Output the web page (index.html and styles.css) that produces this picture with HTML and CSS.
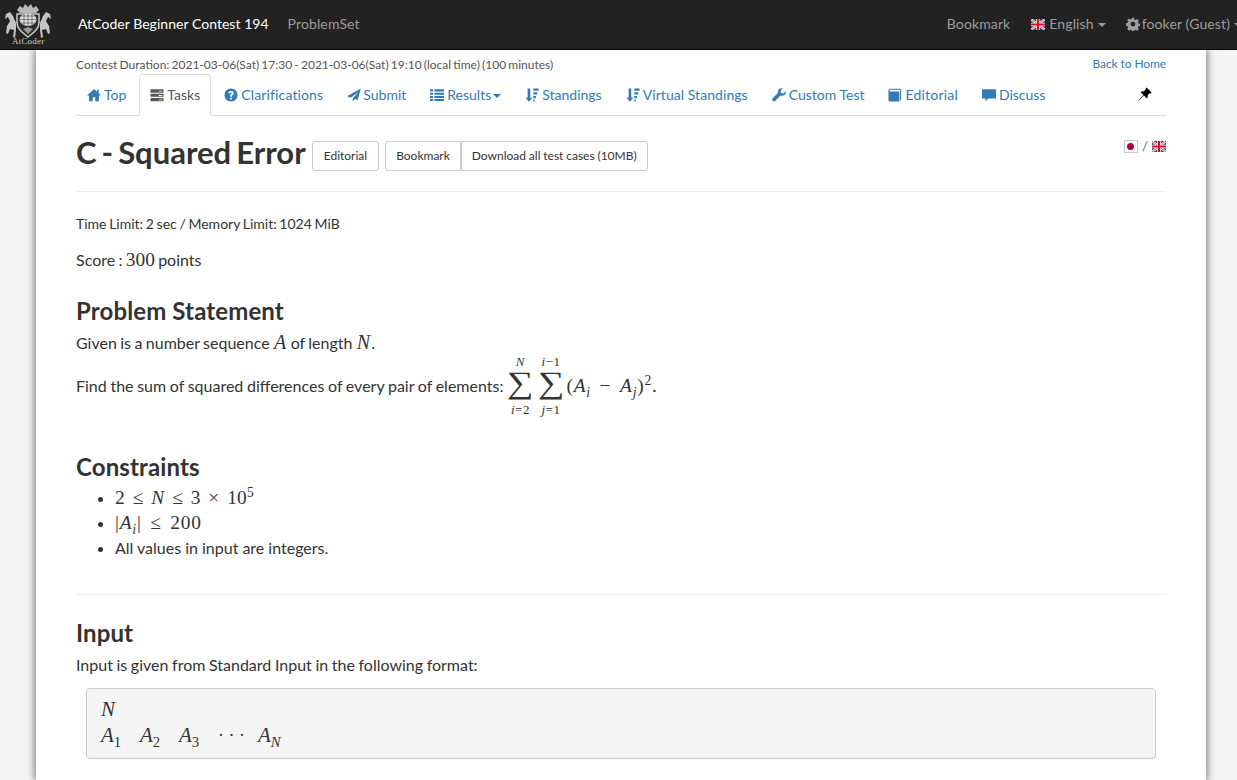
FILE: index.html
```html
<!DOCTYPE html>
<html lang="en">
<head>
<meta charset="utf-8">
<title>C - Squared Error</title>
<link rel="stylesheet" href="styles.css">
</head>
<body>
<svg class="defs" width="0" height="0">
  <symbol id="i-home" viewBox="0 0 16 16"><path d="M8 1 0 8.600h2.400V15h4.100v-4.400h3V15h4.100V8.600H16l-2.600-2.500V2h-2v2.200z"/></symbol>
  <symbol id="i-tasks" viewBox="0 0 16 16"><path d="M1.500 1.500h13q1 0 1 1v2q0 1-1 1h-13q-1 0-1-1v-2q0-1 1-1zm0 5h13q1 0 1 1v1.500q0 1-1 1h-13q-1 0-1-1V7.500q0-1 1-1zm0 5h13q1 0 1 1v1.500q0 1-1 1h-13q-1 0-1-1v-1.500q0-1 1-1z"/><path fill="#fff" d="M10 3h4v1h-4zM10 8h4v1h-4zM10 13h4v1h-4z"/></symbol>
  <symbol id="i-q" viewBox="0 0 16 16"><path fill-rule="evenodd" d="M8 .5a7.500 7.500 0 1 1 0 15A7.500 7.500 0 0 1 8 .5zM7 11v2h2v-2zM8 3.300c-1.800 0-3 1-3.100 2.700h2c.1-.6.500-1 1.100-1 .6 0 1 .3 1 .8 0 1-2 1.200-2 3.500V10h2v-.4c0-1.500 2.100-1.700 2.100-3.900 0-1.500-1.300-2.400-3.100-2.400z"/></symbol>
  <symbol id="i-send" viewBox="0 0 16 16"><path d="M15.800.5 0 9.500l4.200 1.500L13 4.500 6.500 12v3.500l2.500-2.900 3.200 1.200z"/></symbol>
  <symbol id="i-list" viewBox="0 0 16 16"><path d="M0 1.500h3.500V4H0zM5 1.500h11V4H5zM0 5.300h3.500v2.500H0zM5 5.300h11v2.500H5zM0 9h3.500v2.500H0zM5 9h11v2.500H5zM0 12.600h3.500v2.200H0zM5 12.600h11v2.200H5z"/></symbol>
  <symbol id="i-sort" viewBox="0 0 16 16"><path d="M3 .5h3v10.500h2.400l-3.900 4.800L.6 11H3zM9.500.5H15.500v2.600H9.500zM9.500 4.800H14v2.600H9.500zM9.500 9H12.500v2.600H9.500zM9.500 13.200h1.600v2.200H9.500z"/></symbol>
  <symbol id="i-wrench" viewBox="0 0 16 16"><path d="M15.500 3.800 13 6.300l-2.700-.6-.6-2.700L12.200.5C10-.3 7.500.8 6.800 3c-.3 1-.3 1.800 0 2.600L.8 11.700c-.8.800-.8 2.200 0 3 .8.900 2.200.9 3 0l6.100-6c2.600 1 5.700-.7 5.900-3.500 0-.5-.1-1-.3-1.400z"/></symbol>
  <symbol id="i-book" viewBox="0 0 16 16"><path d="M.5 3C.5 1.700 1.500.8 2.700.8H15v12.500l-1.200 1V2H3C2.300 2 1.900 2.400 1.900 3s.5 1 1.100 1h10v11.500H2.700C1.500 15.500.5 14.500.5 13.300z"/></symbol>
  <symbol id="i-comment" viewBox="0 0 16 16"><path d="M1 1.500h14q1 0 1 1v8.500q0 1-1 1H7l-3 3v-3H1q-1 0-1-1V2.500q0-1 1-1z"/></symbol>
  <symbol id="i-pin" viewBox="0 0 16 16"><path d="M9.800.5 15.500 6.200l-1.200 1.200-1-.3-2.300 2.300c.4 1.400.1 2.700-.9 3.600L6.800 9.700 1 15.500l-.5-.5 5.800-5.800L3 5.900c.9-1 2.200-1.300 3.600-.9l2.300-2.300-.3-1z"/></symbol>
  <symbol id="i-cog" viewBox="0 0 16 16"><path fill-rule="evenodd" d="M6.700.8h2.600l.4 2 1.300.6 1.800-1.100 1.900 1.900-1.100 1.800.6 1.300 2 .4v2.600l-2 .4-.6 1.300 1.100 1.800-1.900 1.900-1.800-1.100-1.300.6-.4 2H6.700l-.4-2-1.300-.6-1.800 1.100-1.900-1.900 1.100-1.800-.6-1.300-2-.4V7.100l2-.4.600-1.300-1.100-1.800 1.900-1.900 1.800 1.100 1.300-.6zM8 5.400a2.700 2.700 0 1 0 0 5.400 2.700 2.700 0 0 0 0-5.400z"/></symbol>
  <symbol id="i-uk" viewBox="0 0 14 11" preserveAspectRatio="none"><rect width="14" height="11" fill="#2b3f8f"/><path d="M0 0l14 11M14 0 0 11" stroke="#fff" stroke-width="2.200"/><path d="M0 0l14 11M14 0 0 11" stroke="#d0203a" stroke-width=".8"/><path d="M7 0v11M0 5.500h14" stroke="#fff" stroke-width="3.600"/><path d="M7 0v11M0 5.500h14" stroke="#d80f1e" stroke-width="2.200"/></symbol>
</svg>

<header class="topbar">
  <a class="logo" href="#">
    <svg class="crest" viewBox="0 0 52 36" aria-hidden="true">
      <path d="M15 8l3-4 3 2 2-4 3 3 3-3 2 4 3-2 3 4-3 3H18z" fill="#b9b9b9"/>
      <path d="M15 12h22v9c0 6-6 10-11 14-5-4-11-8-11-14z" fill="#2b2b2b" stroke="#c9c9c9" stroke-width="1.500"/>
      <ellipse cx="26" cy="17.500" rx="8.500" ry="6.500" fill="#ddd"/>
      <path d="M17.500 17.500h17M26 11v13M19 14h14M19 21h14M22 11.500v12M30 11.500v12" stroke="#555" stroke-width=".7"/>
      <path d="M21 27l5-2 5 2-5 5z" fill="#999"/>
      <path d="M11 35l1-7-4-1-2 5-2-1 1-7 3-5-2-4-3 2 1-5 4-2 3 4 3 7v7l-1 8zM41 35l-1-7 4-1 2 5 2-1-1-7-3-5 2-4 3 2-1-5-4-2-3 4-3 7v7l1 8z" fill="#c4c4c4"/>
    </svg>
    <span class="logo-word">AtCoder</span>
  </a>
  <nav class="main-nav">
    <a class="brand" href="#">AtCoder Beginner Contest 194</a>
    <a class="pset" href="#">ProblemSet</a>
  </nav>
  <nav class="user-nav">
    <a class="first" href="#">Bookmark</a>
    <a href="#"><svg class="flag-nav"><use href="#i-uk"/></svg>English<i class="caret"></i></a>
    <a class="user" href="#"><svg class="ico"><use href="#i-cog"/></svg>fooker (Guest)<i class="caret"></i></a>
  </nav>
</header>

<main class="sheet">
  <div class="duration-row">
    <small class="duration">Contest Duration: 2021-03-06(Sat) 17:30 - 2021-03-06(Sat) 19:10 (local time) (100 minutes)</small>
    <a class="back" href="#">Back to Home</a>
  </div>

  <ul class="tabs">
    <li><a href="#"><svg class="ico"><use href="#i-home"/></svg>Top</a></li>
    <li class="active"><a href="#"><svg class="ico"><use href="#i-tasks"/></svg>Tasks</a></li>
    <li class="wide"><a href="#"><svg class="ico"><use href="#i-q"/></svg>Clarifications</a></li>
    <li class="send"><a href="#"><svg class="ico"><use href="#i-send"/></svg>Submit</a></li>
    <li><a href="#"><svg class="ico"><use href="#i-list"/></svg>Results<i class="caret tab-caret"></i></a></li>
    <li><a href="#"><svg class="ico"><use href="#i-sort"/></svg>Standings</a></li>
    <li class="virtual"><a href="#"><svg class="ico"><use href="#i-sort"/></svg>Virtual Standings</a></li>
    <li><a href="#"><svg class="ico"><use href="#i-wrench"/></svg>Custom Test</a></li>
    <li class="edit"><a href="#"><svg class="ico"><use href="#i-book"/></svg>Editorial</a></li>
    <li><a href="#"><svg class="ico"><use href="#i-comment"/></svg>Discuss</a></li>
    <li class="pin"><svg class="ico"><use href="#i-pin"/></svg></li>
  </ul>

  <div class="title-row">
    <h2 class="title">C - Squared Error</h2>
    <a class="btn" href="#">Editorial</a>
    <span class="btn-group"><a class="btn" href="#">Bookmark</a><a class="btn" href="#">Download all test cases (10MB)</a></span>
    <span class="lang"><span class="jp"><i></i></span> / <svg class="flag-lang"><use href="#i-uk"/></svg></span>
  </div>
  <hr class="rule first">

  <p class="limits">Time Limit: 2 sec / Memory Limit: 1024 MiB</p>
  <p class="score">Score : <span class="m num">300</span> points</p>

  <section class="part statement">
    <h3>Problem Statement</h3>
    <p class="given">Given is a number sequence <var class="m v">A</var> of length <var class="m v">N</var>.</p>
    <p class="find">Find the sum of squared differences of every pair of elements:<span class="formula"><span class="sum"><span class="lim"><var>N</var></span><span class="sigma">∑</span><span class="lim"><var>i</var>=2</span></span><span class="sum"><span class="lim"><var>i</var>−1</span><span class="sigma">∑</span><span class="lim"><var>j</var>=1</span></span><span class="m expr">(<var>A</var><sub><var>i</var></sub> − <var>A</var><sub><var>j</var></sub>)<sup>2</sup>.</span></span></p>
  </section>

  <section class="part constraints">
    <h3>Constraints</h3>
    <ul class="bullets">
      <li><span class="m cm">2 ≤ <var>N</var> ≤ 3 × 10<sup>5</sup></span></li>
      <li><span class="m cm abs">|<var>A</var><sub><var>i</var></sub>| ≤ 200</span></li>
      <li>All values in input are integers.</li>
    </ul>
  </section>
  <hr class="rule second">

  <section class="part input">
    <h3>Input</h3>
    <p class="given">Input is given from Standard Input in the following format:</p>
    <div class="pre m">
      <div><var>N</var></div>
      <div class="seq"><span><var>A</var><sub>1</sub></span><span><var>A</var><sub>2</sub></span><span><var>A</var><sub>3</sub></span><span class="dots">· · ·</span><span><var>A</var><sub><var>N</var></sub></span></div>
    </div>
  </section>
</main>
</body>
</html>
```
FILE: styles.css
```css
* { box-sizing: border-box; }
html, body { height: 780px; overflow: hidden; }
body {
  margin: 0;
  background: #f5f5f5;
  color: #333;
  font: 14px/20px Lato, "Liberation Sans", sans-serif;
}
a { color: #337ab7; text-decoration: none; }
.defs { display: block; height: 0; }
.ico { width: 14px; height: 14px; fill: currentColor; vertical-align: -2px; margin-right: 3px; }
.caret {
  display: inline-block;
  margin-left: 4px;
  border-top: 4px solid currentColor;
  border-left: 4px solid transparent;
  border-right: 4px solid transparent;
  vertical-align: 2px;
}
.tab-caret { margin-left: 2px; }

.topbar {
  height: 50px;
  background: #222;
  border-bottom: 1px solid #080808;
  display: flex;
  align-items: flex-start;
  position: relative;
  z-index: 2;
  white-space: nowrap;
}
.logo { width: 78px; height: 49px; padding: 2px 0 0 2px; display: block; color: #ccc; position: relative; }
.crest { width: 52px; height: 36px; display: block; }
.logo-word { position: absolute; left: 12px; top: 36px; font: 9px/11px "Liberation Serif", serif; letter-spacing: .2px; }
.main-nav { display: flex; gap: 19px; line-height: 48px; }
.main-nav a { color: #9d9d9d; }
.main-nav .brand { color: #fff; letter-spacing: .04px; }
.main-nav .pset { letter-spacing: .12px; }
.user-nav { margin-left: auto; display: flex; gap: 20px; line-height: 48px; margin-right: -5px; letter-spacing: .12px; flex: none; }
.user-nav a { color: #9d9d9d; }
.user-nav .first { margin-right: 1px; }
.user-nav .ico { margin-right: 2px; }
.flag-nav { width: 14px; height: 11px; vertical-align: -1px; margin-right: 4px; }

.sheet {
  width: 1170px;
  height: 730px;
  margin-left: 36px;
  padding: 0 40px;
  background: #fff;
  box-shadow: 0 0 8px 1px rgba(0,0,0,.55);
  overflow: hidden;
}
.duration-row { display: flex; justify-content: space-between; height: 24px; padding-top: 5px; }
.duration { font-size: 12px; line-height: 20px; color: #555; word-spacing: -.9px; }
.back { font-size: 12px; line-height: 18px; letter-spacing: -.1px; }

.tabs {
  list-style: none;
  margin: 0;
  padding: 0;
  height: 42px;
  display: flex;
  border-bottom: 1px solid #ddd;
}
.tabs li { margin-right: 2px; height: 42px; }
.tabs a { display: block; padding: 10px; height: 42px; line-height: 20px; border: 1px solid transparent; border-radius: 4px 4px 0 0; }
.tabs .active a { color: #555; background: #fff; border-color: #ddd #ddd #fff; }
.tabs .wide a { letter-spacing: .14px; }
.tabs .send .ico { margin-right: 2px; }
.tabs .virtual a { letter-spacing: .06px; }
.tabs .edit a { letter-spacing: .2px; }
.tabs .pin { margin: 0 0 0 auto; padding: 10px 11px 0 0; color: #000; }

.title-row { display: flex; align-items: flex-start; height: 75px; padding-top: 16px; position: relative; }
.title { margin: 0 6px 0 0; font-size: 31px; line-height: 40px; font-weight: 700; white-space: nowrap; word-spacing: -2.500px; }
.btn {
  display: inline-block;
  height: 30px;
  margin-top: 9px;
  padding: 0 11px;
  font-size: 12px;
  line-height: 28px;
  color: #333;
  background: #fff;
  border: 1px solid #ccc;
  border-radius: 3px;
}
.btn-group { display: flex; margin-left: 6px; }
.btn-group .btn:first-child { border-radius: 3px 0 0 3px; padding: 0 10px; }
.btn-group .btn:last-child { border-radius: 0 3px 3px 0; padding: 0 10px; word-spacing: -.25px; }
.lang { margin-left: auto; margin-top: 4px; font-size: 14px; line-height: 20px; color: #337ab7; display: flex; align-items: center; gap: 4px; height: 20px; }
.jp { width: 14px; height: 13px; border: 1px solid #ccc; background: #fff; display: flex; align-items: center; justify-content: center; }
.jp i { width: 7px; height: 7px; border-radius: 50%; background: #bc002d; display: block; }
.flag-lang { width: 14px; height: 11px; }

.rule { margin: 0; border: 0; border-top: 1px solid #eee; }
p { margin: 0; }
.limits { margin-top: 22px; word-spacing: -.9px; }
.score { margin-top: 15px; font-size: 16px; line-height: 21px; word-spacing: -.8px; }

.m { font-family: "Liberation Serif", "DejaVu Serif", serif; }
var { font-style: italic; }
.num { font-size: 19.400px; }
.v { font-size: 20px; margin: 0 1px; }

h3 { margin: 0; font-size: 24px; line-height: 26px; font-weight: 700; letter-spacing: .12px; }
.statement { margin-top: 28px; }
.given { font-size: 16px; line-height: 21px; margin-top: 8px; word-spacing: -.7px; }
.find { font-size: 16px; display: flex; align-items: center; height: 62px; margin-top: 2px; word-spacing: -.45px; white-space: nowrap; }
.formula { display: inline-flex; align-items: center; margin-left: 4px; word-spacing: normal; }
.sum { display: inline-flex; flex-direction: column; align-items: center; width: 26px; margin-right: 4.500px; font: 13px/14px "Liberation Serif", serif; letter-spacing: .5px; }
.sigma { font: 31px/34px "Liberation Serif", serif; height: 34px; transform: translateY(-3px) scaleX(1.200); letter-spacing: 0; }
.expr { font-size: 19.400px; margin-left: -2px; word-spacing: 3px; letter-spacing: .8px; }
sub, sup { font-size: 70%; line-height: 0; }
.lim { white-space: nowrap; }

.constraints { margin-top: 37px; }
.bullets { margin: 5px 0 0; padding-left: 39px; font-size: 16px; line-height: 25px; word-spacing: -.05px; }
.bullets li { height: 25px; }
.cm { font-size: 19.400px; word-spacing: 2.800px; letter-spacing: .15px; }
.abs { letter-spacing: .8px; word-spacing: 3px; }
.second { margin-top: 34px; }

.input { margin-top: 25px; }
.input .given { margin-top: 8px; word-spacing: -.5px; }
.pre {
  margin: 13px 10px 0;
  height: 71px;
  padding: 7px 14px;
  background: #f5f5f5;
  border: 1px solid #ccc;
  border-radius: 4px;
  font-size: 21px;
  line-height: 26px;
}
.seq { display: flex; gap: 18px; }
.seq span { width: 21px; white-space: nowrap; }
.seq .dots { font-size: 18px; width: 22px; text-align: center; }
```
